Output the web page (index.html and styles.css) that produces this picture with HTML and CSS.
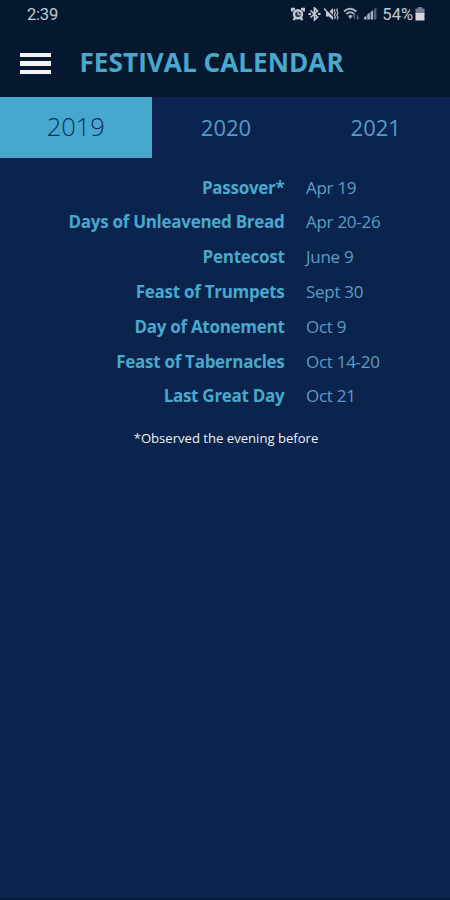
FILE: index.html
```html
<!DOCTYPE html>
<html lang="en">
<head>
  <meta charset="UTF-8">
  <title>Festival Calendar</title>
  <meta name="viewport" content="width=device-width, initial-scale=1">
  <link rel="stylesheet" href="styles.css">
</head>
<body>
  <header>
    <div class="status-bar">
      <span class="time">2:39</span>
      <div class="status-icons">
        <svg class="alarm" width="14" height="14" viewBox="0 0 14 14">
          <path d="M1 4.5V2h3M10 2h3v2.5M2.500 13l2-2.500M11.500 13l-2-2.500" fill="none" stroke="#c3c9d3" stroke-width="2.4"/>
          <circle cx="7" cy="7.2" r="4" fill="#2a3950" stroke="#c3c9d3" stroke-width="2.4"/>
          <path d="M7 4.500V7l2 1" fill="none" stroke="#c3c9d3" stroke-width="1.3"/>
        </svg>
        <svg class="bluetooth" width="13" height="14" viewBox="0 0 13 14">
          <path d="M2.500 3.500l7 6.500-3 3V1l3 3-7 6.500" fill="none" stroke="#c3c9d3" stroke-width="1.7"/>
          <path d="M.5 7h2.500M10 7h2.500" stroke="#c3c9d3" stroke-width="1.8"/>
        </svg>
        <svg class="mute" width="15" height="14" viewBox="0 0 15 14">
          <path d="M2 5h3l4-4v12L5 9.500H2z" fill="#c3c9d3"/>
          <path d="M1 .5l8.500 9" stroke="#071a33" stroke-width="1.2"/>
          <path d="M0 1.500l9 10" stroke="#c3c9d3" stroke-width="1.4"/>
          <path d="M11 2l-.8 2 1.300 2-1.300 2 1.300 2-1 2M13.500 1.500l-.8 2 1.300 2.500-1.300 2 1.300 2.500-1 2" fill="none" stroke="#c3c9d3" stroke-width="1.100"/>
        </svg>
        <svg class="wifi" width="17" height="14" viewBox="0 0 17 14">
          <path d="M1 4.500q6-5.500 12.500 0M3.300 7q4-3.500 8 0" fill="none" stroke="#a9b1bf" stroke-width="1.8"/>
          <path d="M5 9q2.300-1.800 4.600 0L7.300 12z" fill="#a9b1bf"/>
          <path d="M11.500 12V8l-1.500 1.500M14.500 8v4L16 10.500" fill="none" stroke="#56647a" stroke-width="1.2"/>
        </svg>
        <svg class="signal" width="13" height="13" viewBox="0 0 13 13">
          <path d="M0 12.500V10.500l2.500-2v4zM3.300 12.500V7.500l2.500-2v7zM6.600 12.500V5l2.500-2v9.500z" fill="#aab2bf"/>
          <path d="M9.900 12.500V2.500L12.400.5v12z" fill="#56647a"/>
        </svg>
        <span class="percent">54%</span>
        <svg class="battery" width="10" height="14" viewBox="0 0 10 14">
          <path d="M3 0h4v1.500h2.500V7h-9V1.500H3z" fill="#747e8f"/>
          <path d="M.5 6h9v7.500h-9z" fill="#d5d8de"/>
        </svg>
      </div>
    </div>
    <div class="title-bar">
      <button class="menu" aria-label="Menu">
        <span></span>
        <span></span>
        <span></span>
      </button>
      <h1>FESTIVAL CALENDAR</h1>
    </div>
  </header>

  <nav class="tabs">
    <button class="tab active">2019</button>
    <button class="tab">2020</button>
    <button class="tab">2021</button>
  </nav>

  <main>
    <dl class="festivals">
      <dt>Passover*</dt>
      <dd>Apr 19</dd>
      <dt>Days of Unleavened Bread</dt>
      <dd>Apr 20-26</dd>
      <dt>Pentecost</dt>
      <dd>June 9</dd>
      <dt>Feast of Trumpets</dt>
      <dd>Sept 30</dd>
      <dt>Day of Atonement</dt>
      <dd>Oct 9</dd>
      <dt>Feast of Tabernacles</dt>
      <dd>Oct 14-20</dd>
      <dt>Last Great Day</dt>
      <dd>Oct 21</dd>
    </dl>
    <p class="note">*Observed the evening before</p>
  </main>
</body>
</html>
```
FILE: styles.css
```css
* { box-sizing: border-box; margin: 0; padding: 0; }
body {
  font-family: 'Open Sans', 'Noto Sans', sans-serif;
  background: #0b244d;
  color: #4aa8cc;
  height: 100vh;
  overflow: hidden;
  border-bottom: 1px solid #071a38;
}
header {
  height: 97px;
  background: #061830;
}
.status-bar {
  display: flex;
  justify-content: space-between;
  align-items: center;
  height: 29px;
  padding: 0 25px 0 27px;
  font-family: Roboto, sans-serif;
  font-size: 16.5px;
  color: #c3c9d3;
}
.time { letter-spacing: -0.2px; }
.status-icons {
  display: flex;
  align-items: center;
  height: 27px;
  margin-bottom: 2px;
}
.status-icons svg { flex: none; }
.bluetooth { margin-left: 3px; }
.mute { margin-left: 3px; }
.wifi { margin-left: 4px; }
.signal { margin-left: 4px; }
.percent {
  margin-left: 5px;
  padding-top: 2px;
}
.battery { margin-left: 2px; }

.title-bar {
  display: flex;
  align-items: center;
  height: 68px;
  padding-left: 20px;
}
.menu {
  display: flex;
  flex-direction: column;
  gap: 4px;
  width: 31px;
  margin-top: 1px;
  border: none;
  background: none;
  cursor: pointer;
}
.menu span {
  height: 4.5px;
  background: #f4f2f2;
}
h1 {
  margin: 0 0 2px 28.5px;
  font-size: 26.2px;
  font-weight: 700;
  line-height: 36px;
  white-space: nowrap;
}

.tabs {
  display: grid;
  grid-template-columns: 151.5px 149px 1fr;
  height: 61px;
}
.tab {
  padding-bottom: 2px;
  border: none;
  background: #0b2350;
  color: #559dc2;
  font-family: inherit;
  font-size: 22px;
  cursor: pointer;
}
.tab:last-child { padding-left: 1px; }
.tab.active {
  padding-bottom: 4px;
  background: #46a8cd;
  color: #0c2c62;
  font-size: 25.5px;
  font-weight: 300;
}

.festivals {
  display: grid;
  grid-template-columns: 284.5px 1fr;
  column-gap: 21.5px;
  padding-top: 12.6px;
  font-size: 17px;
  line-height: 34.8px;
  letter-spacing: -0.28px;
}
dt {
  text-align: right;
  font-weight: 700;
  white-space: nowrap;
}
dd { color: #5c9cc4; }
.note {
  margin-top: 13.4px;
  padding-left: 2px;
  text-align: center;
  font-size: 13.1px;
  font-weight: 500;
  line-height: 20px;
  color: #eef0f2;
}
```
